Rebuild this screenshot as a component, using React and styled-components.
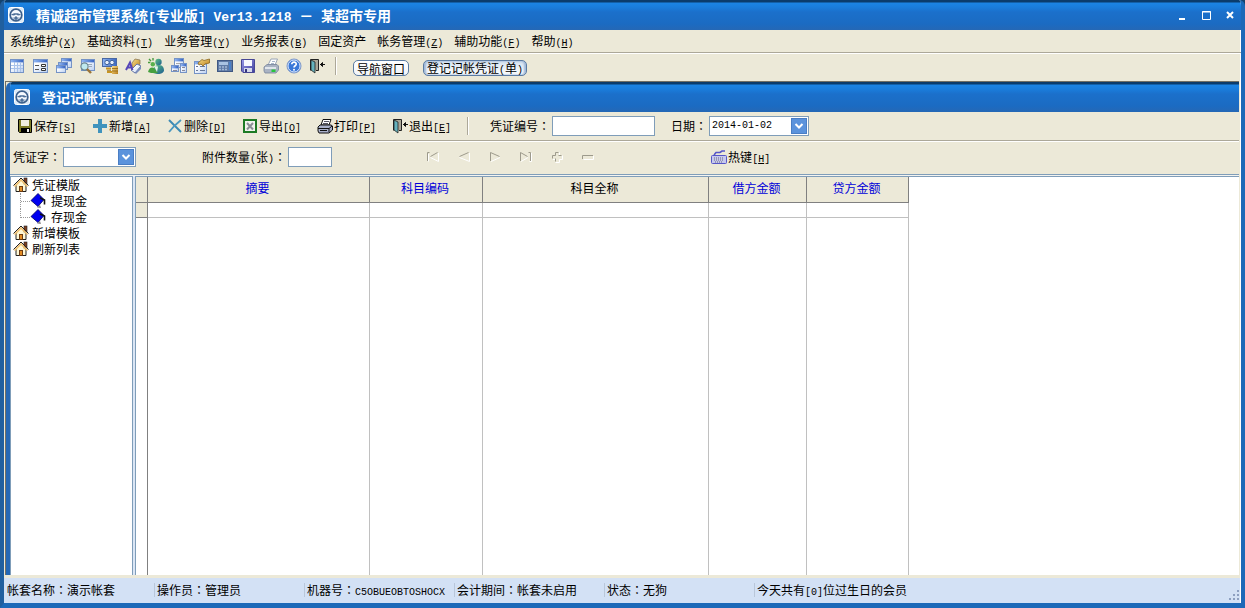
import styled, { createGlobalStyle } from "styled-components";

const GlobalStyle = createGlobalStyle`
    *{
        box-sizing: border-box;
    }

    body{
        margin: 0;
        font-family: "Noto Sans CJK SC", sans-serif;
        font-size: 12px;
        line-height: 16px;
        color: #000;
        background: #14436f;
    }

    button, input, select{
        font: inherit;
        color: inherit;
    }
`;

const Frame = styled.div`
    display: flex;
    flex-direction: column;
    min-height: 100vh;
    border: 4px solid #1c69b8;
    border-top: none;
    border-left-color: #205f9f;
    border-bottom-width: 5px;
    border-radius: 6px 6px 0 0;
    background: #ece9d8;
    box-shadow: inset -1px 0 0 #fff;
    overflow: hidden;
`;

const TitleBar = styled.header`
    display: flex;
    align-items: center;
    height: 30px;
    gap: 12px;
    margin: ${(props) => (props.$inner ? "0" : "0 -4px")};
    padding-left: ${(props) => (props.$inner ? "4px" : "8px")};
    color: #fff;
    background: linear-gradient(to bottom, #0b3c6c 0, #0b3c6c 2px, #1b84e4 3px, #1a7ddc 7px, #1b70cb 12px, #1b6bc2 24px, #2568b5 30px);
`;

const Title = styled.h1`
    flex: 1;
    margin: 0;
    font-size: 14px;
    line-height: 20px;
    font-weight: 700;
    white-space: pre;
`;

const Bold = styled.span`
    font-family: "Liberation Mono", monospace;
    font-size: 13px;
    line-height: 1;
`;

const Mono = styled.span`
    font-family: "Liberation Mono", monospace;
    font-size: 10px;
    line-height: 1;
`;

/* the TC face centres the full-width colon in its cell */
const Colon = styled.span`
    font-family: "Noto Sans CJK TC", sans-serif;
    line-height: 1;
`;

const WinButtons = styled.div`
    display: flex;
    padding-right: 3px;
`;

const WinButton = styled.button`
    display: flex;
    justify-content: center;
    width: 24px;
    padding: 0;
    border: none;
    background: none;
`;

const MenuBar = styled.nav`
    display: flex;
    align-items: center;
    gap: 11px;
    height: 23px;
    padding-left: 6px;
    border-bottom: 1px solid #aca899;
`;

const MenuLink = styled.a`
    color: inherit;
    text-decoration: none;
`;

const MainTools = styled.div`
    display: flex;
    align-items: center;
    height: 28px;
    padding: 0 0 4px 2px;
    border-top: 1px solid #fff;
`;

const IconButton = styled.button`
    display: flex;
    justify-content: center;
    width: 23px;
    padding: 0;
    border: none;
    background: none;
`;

const Separator = styled.span`
    width: 2px;
    height: 18px;
    border-left: 1px solid #aca899;
    border-right: 1px solid #fff;
    margin: ${(props) => (props.$child ? "0 21px 0 0" : "0 16px 0 7px")};
`;

const TabButton = styled.button`
    height: 16px;
    padding: 0 3px;
    margin: 5px 14px 0 0;
    line-height: 13px;
    border: 1px solid #5b7ba2;
    border-radius: 5px;
    background: ${(props) => (props.$active ? "linear-gradient(#d3e0ef, #fff)" : "linear-gradient(#fff, #f1f4f8)")};
    box-shadow: ${(props) => (props.$active ? "inset 2px 0 2px #9fb8d8, inset -2px 0 2px #9fb8d8" : "none")};
`;

const Child = styled.section`
    flex: 1;
    display: flex;
    flex-direction: column;
    margin: 0 2px 0 1px;
    border-left: 1px solid #716f64;
    border-top: 1px solid #716f64;
`;

const ChildWindow = styled.div`
    flex: 1;
    display: flex;
    flex-direction: column;
    border-left: 4px solid #2568b5;
    border-radius: 6px 0 0 0;
    overflow: hidden;
`;

const Bar = styled.div`
    display: flex;
    align-items: center;
    height: ${(props) => (props.$tall ? "34px" : "29px")};
    padding: ${(props) => (props.$tall ? "0 0 3px 3px" : "0 0 2px 7px")};
    border-bottom: 1px solid ${(props) => (props.$tall ? "#7f9db9" : "#aca899")};
    border-top: 1px solid ${(props) => (props.$tall ? "#fff" : "#ece9d8")};
`;

const ToolButton = styled.button`
    display: flex;
    align-items: center;
    gap: 1px;
    width: 59px;
    margin-right: 16px;
    padding: 0;
    border: none;
    background: none;
    white-space: nowrap;

    & > svg{
        flex-shrink: 0;
    }
`;

const Label = styled.label`
    white-space: nowrap;
    margin-left: ${(props) => (props.$gap ? props.$gap : 0)}px;
`;

const TextInput = styled.input`
    width: ${(props) => (props.$small ? 44 : 103)}px;
    height: 20px;
    margin-left: 2px;
    padding: 0 3px;
    border: 1px solid #7f9db9;
    border-radius: 0;
    background: #fff;
`;

const Combo = styled.span`
    position: relative;
    display: flex;
    width: ${(props) => props.$width}px;
    margin-left: 2px;

    & > select{
        appearance: none;
        width: 100%;
        height: 20px;
        padding: 0 18px 0 2px;
        border: 1px solid #7f9db9;
        border-radius: 0;
        background: #fff;
        font-family: "Liberation Mono", monospace;
        font-size: 10px;
    }

    & > svg{
        position: absolute;
        top: 2px;
        right: 2px;
        pointer-events: none;
    }
`;

const Nav = styled.div`
    display: flex;
    margin: 0 108px 0 85px;
`;

const NavButton = styled.button`
    display: flex;
    justify-content: center;
    width: 31px;
    padding: 0;
    border: none;
    background: none;
`;

const Work = styled.div`
    flex: 1;
    display: flex;
    background: #fff;
    border-top: 1px solid #f4f4f0;
`;

const Tree = styled.ul`
    width: 123px;
    margin: 0;
    padding: 0 0 0 2px;
    list-style: none;
    border: 1px solid #7f9db9;
    border-width: 1px 1px 0 1px;
`;

const SubTree = styled.ul`
    margin: 0 0 0 7px;
    padding: 0;
    list-style: none;
`;

const Node = styled.li`
    display: flex;
    align-items: center;
    gap: ${(props) => (props.$sub ? "5px" : "3px")};
    height: 16px;
    line-height: 14px;
`;

const Branch = styled.span`
    align-self: stretch;
    width: 11px;
    margin-right: -6px;
    border-left: 1px dotted #999;
    background: repeating-linear-gradient(to right, #999 0 1px, transparent 1px 2px) 0 8px / 100% 1px no-repeat;
    ${(props) => props.$last && "height: 9px; align-self: flex-start;"}
`;

const GridBox = styled.div`
    flex: 1;
    display: flex;
    margin-left: 2px;
    border-left: 1px solid #7f9db9;
    border-top: 1px solid #7f9db9;
    box-shadow: -2px 0 0 #dbe6f5;
`;

const Table = styled.table`
    width: 773px;
    table-layout: fixed;
    border-collapse: separate;
    border-spacing: 0;

    & th{
        height: 26px;
        padding: 0 2px 3px 0;
        font-weight: 400;
        background: #ece9d8;
        border-right: 1px solid #808080;
        border-bottom: 1px solid #808080;
    }

    & td{
        padding: 0;
        border-right: 1px solid #c0c0c0;
    }

    & td:first-child{
        border-right-color: #808080;
    }
`;

const HeadCell = styled.th`
    color: ${(props) => (props.$blue ? "#0000d8" : "#000")};
`;

const Row = styled.tr`
    & > td{
        height: 15px;
        border-bottom: 1px solid #c0c0c0;
    }

    & > td:first-child{
        background: #ece9d8;
        border-bottom-color: #808080;
    }
`;

const StatusBar = styled.footer`
    display: flex;
    align-items: center;
    height: 28px;
    padding-bottom: 2px;
    border-top: 3px solid #ece9d8;
    background: #d3e1f5;
    margin-right: 1px;
`;

const StatusItem = styled.span`
    width: 150px;
    height: 14px;
    line-height: 13px;
    padding-left: 2px;
    white-space: nowrap;
    border-left: 1px solid #b9c7da;

    &:first-child{
        border-left-color: transparent;
    }
`;

const Grip = styled.svg`
    margin-left: auto;
    align-self: flex-end;
`;

function Icon({ children }) {
    return (
        <svg width="16" height="16" viewBox="0 0 16 16" aria-hidden="true">
            {children}
        </svg>
    );
}

/* gradients shared by the toolbar icons */
function Gradients() {
    return (
        <svg width="0" height="0" style={{ display: "block" }} aria-hidden="true">
            <defs>
                <linearGradient id="paper" x1="0" y1="0" x2="1" y2="1">
                    <stop offset="0.3" stopColor="#fff" />
                    <stop offset="1" stopColor="#b9cff2" />
                </linearGradient>
                <linearGradient id="bar">
                    <stop offset="0" stopColor="#8fb5f2" />
                    <stop offset="1" stopColor="#3a67c4" />
                </linearGradient>
                <linearGradient id="gold" x1="0" y1="0" x2="1" y2="1">
                    <stop offset="0" stopColor="#f8dd8a" />
                    <stop offset="1" stopColor="#b97f1c" />
                </linearGradient>
                <linearGradient id="violet" x1="0" y1="0" x2="1" y2="1">
                    <stop offset="0" stopColor="#9a9bea" />
                    <stop offset="1" stopColor="#3f3f9c" />
                </linearGradient>
                <linearGradient id="green" x1="0" y1="0" x2="1" y2="1">
                    <stop offset="0" stopColor="#5cc27e" />
                    <stop offset="1" stopColor="#1f5d93" />
                </linearGradient>
            </defs>
        </svg>
    );
}

function Wheel() {
    return (
        <Icon>
            <rect x="0.5" y="0.5" width="15" height="15" rx="2" fill="#dce9f6" stroke="#fff" />
            <circle cx="8" cy="8" r="5.8" fill="#f6faff" stroke="#3d608c" strokeWidth="1.7" />
            <path d="M3 8C4 5.6 12 5.6 13 8L10 8.6L8 7.6L6 8.6Z" fill="#4e7099" />
            <path d="M8 9L10.4 11.2L8 13.4L5.6 11.2Z" fill="#4e7099" />
            <path d="M4.6 10L7 12.6M11.4 10L9 12.6" stroke="#8ea8c7" />
        </Icon>
    );
}

function Sheet({ x = 0, y = 0, w = 14, h = 13 }) {
    return (
        <g>
            <rect x={x + 0.5} y={y + 0.5} width={w} height={h} fill="url(#paper)" stroke="#7593c6" />
            <rect x={x + 1} y={y + 1} width={w - 1} height="2.4" fill="url(#bar)" />
        </g>
    );
}

function Door() {
    return (
        <Icon>
            <path d="M1.5 12.5V1.5H9.5V12.5H7" fill="#aaa697" stroke="#222" />
            <path d="M2 2L6 4V15L2 12Z" fill="#65b2bd" stroke="#222" strokeWidth="0.8" />
            <path d="M11 6.5H16M13.5 4.5L11.5 6.5L13.5 8.5Z" fill="#111" stroke="#111" />
        </Icon>
    );
}

const mainIcons = [
    ["表格", <Icon><Sheet y={1} w={13} /><path d="M1 7.5H13M1 10.5H13M4.5 4V14M7.5 4V14M10.5 4V14" stroke="#a9c2ea" /></Icon>],
    ["表单", <Icon><Sheet y={1} /><path d="M2 7.5H6M2 11.5H6" stroke="#555" /><path d="M8.5 6.5H12.5V8.5H8.5ZM8.5 10.5H12.5V12.5H8.5Z" fill="#fff" stroke="#333" /></Icon>],
    ["窗口", <Icon><Sheet x={5} w={10} h={9} /><Sheet x={2} y={4} w={9} h={7} /><Sheet y={7} w={9} h={7} /></Icon>],
    ["查询", <Icon><Sheet x={2} y={1} w={13} h={11} /><path d="M9 6.5H13M10 8.5H13" stroke="#9ab" /><circle cx="5.5" cy="8.5" r="3.6" fill="#bfe9ee" stroke="#6b8692" strokeWidth="1.2" /><path d="M8 11L12 15" stroke="#9b7436" strokeWidth="2.4" /></Icon>],
    ["资金", <Icon><rect x="0.5" y="0.5" width="14" height="8" fill="url(#bar)" stroke="#4a68a3" /><circle cx="5" cy="4.5" r="2.2" fill="#e7effb" stroke="#3d5f99" /><circle cx="10" cy="4.5" r="2.2" fill="#e7effb" stroke="#3d5f99" /><path d="M4 10.5H9M5 14H11" stroke="#c79420" strokeWidth="2.2" /><rect x="10" y="8" width="6" height="8" fill="url(#gold)" /><path d="M10 10.5H16M10 13H16M5 12.3H9" stroke="#8c5f10" strokeWidth="0.8" /></Icon>],
    ["账簿", <Icon><path d="M7 5L10 1L15 2V6L10 11L7 9Z" fill="url(#gold)" stroke="#8d7a58" strokeWidth="0.8" /><path d="M6 12L12 6L16 8L10 15Z" fill="url(#paper)" stroke="#6474a5" /><path d="M10 15L16 8V11L11 16Z" fill="#7b8dbb" /><path d="M1 12L5 4.5L7.5 12M3 9.5H7" fill="none" stroke="#5746b8" strokeWidth="2" /></Icon>],
    ["人员", <Icon><circle cx="10.5" cy="4" r="3.2" fill="url(#green)" /><path d="M5 15C5 9 7 7 11 7C15 7 16 10 16 13C15 15.5 12 16 9 16Z" fill="url(#green)" /><path d="M1 1L3 3M0 4.5H2.4M5 0V2.4" stroke="#479a3d" strokeWidth="1.4" /><circle cx="4.8" cy="6.2" r="2.2" fill="#58b14c" /><path d="M0 14C1 9.4 4 8.6 6 10L10 15H3Z" fill="#46a03f" /><path d="M6 8L9 14L10 8.5Z" fill="#e6f6ea" /></Icon>],
    ["层叠", <Icon><Sheet x={3} w={9} h={9} /><path d="M5 5.5H11" stroke="#aaa" /><Sheet y={7} w={7} h={6} /><Sheet x={9} y={5} w={6} h={9} /><path d="M2 12.5H6M11 9.5H14M11 12.5H14" stroke="#889" /></Icon>],
    ["属性", <Icon><Sheet y={3} w={12} h={12} /><path d="M2 8.5H4M6 8.5H11M2 12.5H4M6 12.5H11" stroke="#667799" /><path d="M4 5L8 1.5L10 2.5L15.5 1V5L11 6L9 8L7 6L5 7Z" fill="url(#gold)" stroke="#8e6820" strokeWidth="0.8" /></Icon>],
    ["计算", <Icon><rect x="0.5" y="2.5" width="15" height="11" fill="#5f7ba6" stroke="#3f5883" /><rect x="2" y="4" width="9" height="3" fill="#a9c3e2" /><path d="M2 9H11M2 11.5H11" stroke="#a4b9d6" strokeWidth="1.4" strokeDasharray="2 1" /><rect x="12" y="4" width="2" height="8" fill="#4a80c8" /></Icon>],
    ["存盘", <Icon><path d="M1.5 1.5H14.5V14.5H3L1.5 13Z" fill="url(#violet)" stroke="#474794" /><rect x="4" y="2" width="8" height="6" fill="#f7f8ff" /><rect x="4" y="10" width="8" height="4" fill="#d5d9eb" /><rect x="5" y="11" width="2" height="3" fill="#34347d" /></Icon>],
    ["打印", <Icon><path d="M5 7L8 1H14.5L12 7Z" fill="#fff" stroke="#9aa5b6" /><path d="M9 3.5H12M8 5.5H11" stroke="#a8b6cc" /><path d="M1 9L4 6.5H14L15.5 8V12L13 15H2L1 13Z" fill="#a9b3c3" stroke="#77849a" strokeWidth="0.8" /><path d="M2 10H13" stroke="#f5f7fa" strokeWidth="1.5" /><rect x="8.5" y="11.5" width="4" height="2.5" fill="#28c43d" /></Icon>],
    ["帮助", <Icon><circle cx="8" cy="8" r="7" fill="#3a78d8" stroke="#8097c4" /><circle cx="8" cy="8" r="6" fill="none" stroke="#dbe9ff" /><path d="M5.8 6.3C5.8 3.4 10.3 3.6 10.2 6.2C10.1 7.8 8 7.8 8 9.6" fill="none" stroke="#fff" strokeWidth="1.7" /><circle cx="8" cy="11.8" r="1" fill="#fff" /></Icon>],
    ["退出", <Door />],
];

const menus = [
    ["系统维护", "X"],
    ["基础资料", "T"],
    ["业务管理", "Y"],
    ["业务报表", "B"],
    ["固定资产", ""],
    ["帐务管理", "Z"],
    ["辅助功能", "F"],
    ["帮助", "H"],
];

const tools = [
    ["保存", "S", <Icon><path d="M1.5 1.5H14.5V14.5H2.5L1.5 13.5Z" fill="#7d7c27" stroke="#000" /><rect x="4" y="2" width="8" height="6" fill="#f0eedf" /><rect x="4" y="10" width="9" height="4" fill="#000" /><rect x="10" y="11" width="2" height="3" fill="#eee" /></Icon>],
    ["新增", "A", <Icon><path d="M6 1H10V6H15V10H10V15H6V10H1V6H6Z" fill="#3f93bd" /></Icon>],
    ["删除", "D", <Icon><path d="M2 2L14 14" stroke="#3c89b4" strokeWidth="2" /><path d="M14 2C9 6 5 10 2 14" fill="none" stroke="#4a98c0" strokeWidth="1.8" /></Icon>],
    ["导出", "O", <Icon><rect x="2" y="2" width="12" height="12" fill="#f1f3ee" stroke="#1c7a24" strokeWidth="2" /><path d="M5 5L11 11.5M11 5L5 11.5" stroke="#8a8f95" strokeWidth="2" /></Icon>],
    ["打印", "P", <Icon><path d="M4 7L6 1.5H14L12 7Z" fill="#fff" stroke="#111" /><path d="M7 3.5H12M6 5.5H11" stroke="#556" /><path d="M1 9L3 7H14L15.5 8V12L12 15H2L1 13Z" fill="#a9b0ca" stroke="#111" /><path d="M1 10.5H12L15 8M12 10.5V14M3 12.5H10" fill="none" stroke="#111" /></Icon>],
    ["退出", "E", <Door />],
];

/* each glyph is etched: a grey upper left edge and a white lower right edge */
const navShapes = [
    ["首条", "M2.5 12V3.5H4.5M5.5 7.5L12.5 3.5", "M3.5 12.5V5M5.5 8.5L13.5 12.5V4"],
    ["上条", "M3.5 7.5L12.5 3.5", "M3.5 8.5L13.5 12.5V4"],
    ["下条", "M3.5 12V3.5L12.5 7.5", "M4 12.5L13 8.5"],
    ["末条", "M2.5 12V3.5L9.5 7.5M10.5 3.5H12.5V12", "M3 12.5L10 8.5M13.5 4V12.5H11.5"],
    ["加行", "M3.5 9.5V6.5H6.5V3.5H9.5M9.5 6.5H12.5M6.5 9.5V12.5", "M10.5 3.5V6M13.5 6.5V10.5H10.5V13.5H6.5M4 10.5H6"],
    ["减行", "M2.5 10V6.5H13", "M3.5 10.5H13.5V7"],
];

const status = [
    ["帐套名称", "演示帐套"],
    ["操作员", "管理员"],
    ["机器号", <Mono>C5OBUEOBTOSHOCX</Mono>],
    ["会计期间", "帐套未启用"],
    ["状态", "无狗"],
];

function Accel({ letter, round }) {
    return (
        <Mono>
            {round ? "(" : "["}
            <u>{letter}</u>
            {round ? ")" : "]"}
        </Mono>
    );
}

function Arrow() {
    return (
        <svg width="16" height="16" viewBox="0 0 16 16" aria-hidden="true">
            <rect width="16" height="16" fill="#5b93dc" />
            <rect x="0.5" y="0.5" width="15" height="15" fill="none" stroke="#4a7ec4" />
            <path d="M4.5 6L8 9.5L11.5 6" fill="none" stroke="#fff" strokeWidth="2" />
        </svg>
    );
}

function House() {
    return (
        <Icon>
            <path d="M3 8V14.5H13V8L8 3Z" fill="#fff8d6" stroke="#222" />
            <rect x="11" y="1" width="3" height="6" fill="#7b3c20" stroke="#222" strokeWidth="0.6" />
            <path d="M1.5 9.5L8 3L14.5 9.5" fill="none" stroke="#f0c070" strokeWidth="1.6" />
            <path d="M0.5 8.5L8 1L15.5 8.5" fill="none" stroke="#222" />
            <rect x="6.5" y="9.5" width="3" height="5" fill="#e58c22" stroke="#6c3b11" />
        </Icon>
    );
}

function Diamond() {
    return (
        <Icon>
            <path d="M1 7.5L8 0.5L14 6.5L8 13.5Z" fill="#0000f0" stroke="#000060" strokeWidth="0.8" />
            <path d="M10 5L14.5 7V11.5" fill="none" stroke="#111" strokeWidth="1.6" />
            <path d="M7 14.5L10 12L11 15Z" fill="#888" />
        </Icon>
    );
}

function App() {
    return (
        <>
            <GlobalStyle />
            <Gradients />
            <Frame>
                <TitleBar>
                    <Wheel />
                    <Title>
                        精诚超市管理系统<Bold>[</Bold>专业版<Bold>] Ver13.1218 </Bold>－<Bold> </Bold>某超市专用
                    </Title>
                    <WinButtons>
                        <WinButton aria-label="最小化"><Icon><path d="M5 12H11" stroke="#fff" strokeWidth="2" /></Icon></WinButton>
                        <WinButton aria-label="最大化"><Icon><path d="M4.5 4.5H12.5V12.5H4.5ZM4 5H13" fill="none" stroke="#fff" /></Icon></WinButton>
                        <WinButton aria-label="关闭"><Icon><path d="M5 5L11 11M11 5L5 11" stroke="#fff" strokeWidth="2" /></Icon></WinButton>
                    </WinButtons>
                </TitleBar>
                <MenuBar>
                    {menus.map(([text, letter]) => (
                        <MenuLink href="#" key={text}>
                            {text}
                            {letter && <Accel letter={letter} round />}
                        </MenuLink>
                    ))}
                </MenuBar>
                <MainTools>
                    {mainIcons.map(([name, icon]) => (
                        <IconButton key={name} aria-label={name}>{icon}</IconButton>
                    ))}
                    <Separator />
                    <TabButton>导航窗口</TabButton>
                    <TabButton $active>登记记帐凭证<Mono>(</Mono>单<Mono>)</Mono></TabButton>
                </MainTools>
                <Child>
                    <ChildWindow>
                        <TitleBar $inner>
                            <Wheel />
                            <Title as="h2">登记记帐凭证<Bold>(</Bold>单<Bold>)</Bold></Title>
                        </TitleBar>
                        <Bar>
                            {tools.map(([text, letter, icon]) => (
                                <ToolButton key={text}>
                                    {icon}
                                    <span>{text}<Accel letter={letter} /></span>
                                </ToolButton>
                            ))}
                            <Separator $child />
                            <Label htmlFor="number">凭证编号<Colon>：</Colon></Label>
                            <TextInput id="number" />
                            <Label htmlFor="date" $gap={16}>日期<Colon>：</Colon></Label>
                            <Combo $width={100}>
                                <select id="date"><option>2014-01-02</option></select>
                                <Arrow />
                            </Combo>
                        </Bar>
                        <Bar $tall>
                            <Label htmlFor="word">凭证字<Colon>：</Colon></Label>
                            <Combo $width={73}>
                                <select id="word"><option></option></select>
                                <Arrow />
                            </Combo>
                            <Label htmlFor="count" $gap={66}>附件数量<Mono>(</Mono>张<Mono>)</Mono><Colon>：</Colon></Label>
                            <TextInput id="count" $small />
                            <Nav>
                                {navShapes.map(([name, shade, light]) => (
                                    <NavButton key={name} aria-label={name}>
                                        <Icon>
                                            <path d={light} fill="none" stroke="#fff" />
                                            <path d={shade} fill="none" stroke="#9d9a8c" />
                                        </Icon>
                                    </NavButton>
                                ))}
                            </Nav>
                            <ToolButton>
                                <Icon>
                                    <rect x="0.5" y="6.5" width="15" height="8" rx="1" fill="#c6c8ee" stroke="#5656c8" />
                                    <path d="M3 9H13M3 11H13M4 13H12" stroke="#66667c" strokeDasharray="1 1" />
                                    <path d="M3 6L5 3.5H9L11 2H14" fill="none" stroke="#5656c8" strokeWidth="1.6" />
                                </Icon>
                                <span>热键<Accel letter="H" /></span>
                            </ToolButton>
                        </Bar>
                        <Work>
                            <Tree>
                                <Node><House />凭证模版</Node>
                                <li>
                                    <SubTree>
                                        <Node $sub><Branch /><Diamond />提现金</Node>
                                        <Node $sub><Branch $last /><Diamond />存现金</Node>
                                    </SubTree>
                                </li>
                                <Node><House />新增模板</Node>
                                <Node><House />刷新列表</Node>
                            </Tree>
                            <GridBox>
                                <Table>
                                    <colgroup>
                                        <col width="12" />
                                        <col width="222" />
                                        <col width="113" />
                                        <col width="226" />
                                        <col width="98" />
                                        <col width="102" />
                                    </colgroup>
                                    <thead>
                                        <tr>
                                            <HeadCell />
                                            <HeadCell $blue>摘要</HeadCell>
                                            <HeadCell $blue>科目编码</HeadCell>
                                            <HeadCell>科目全称</HeadCell>
                                            <HeadCell $blue>借方金额</HeadCell>
                                            <HeadCell $blue>贷方金额</HeadCell>
                                        </tr>
                                    </thead>
                                    <tbody>
                                        <Row><td /><td /><td /><td /><td /><td /></Row>
                                        <tr><td /><td /><td /><td /><td /><td /></tr>
                                    </tbody>
                                </Table>
                            </GridBox>
                        </Work>
                    </ChildWindow>
                </Child>
                <StatusBar>
                    {status.map(([text, value]) => (
                        <StatusItem key={text}>
                            {text}<Colon>：</Colon>{value}
                        </StatusItem>
                    ))}
                    <StatusItem>今天共有<Mono>[0]</Mono>位过生日的会员</StatusItem>
                    <Grip width="12" height="12" viewBox="0 0 12 12" aria-hidden="true">
                        <path d="M9 1H11V3H9ZM9 5H11V7H9ZM5 5H7V7H5ZM9 9H11V11H9ZM5 9H7V11H5ZM1 9H3V11H1Z" fill="#8d9fc0" />
                    </Grip>
                </StatusBar>
            </Frame>
        </>
    );
}

export default App;
